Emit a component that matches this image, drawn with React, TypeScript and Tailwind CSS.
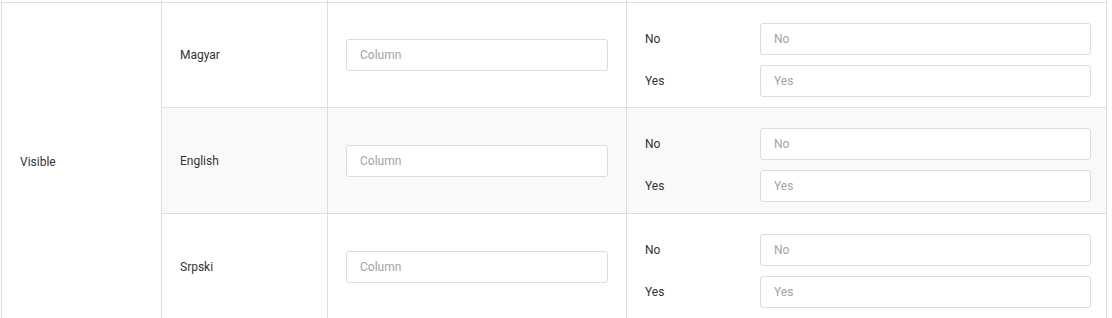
const rows = [
  { lang: "Magyar", bg: "bg-white", h: "h-[105px]" },
  { lang: "English", bg: "bg-[#f9f9f9]", h: "h-[106px]" },
  { lang: "Srpski", bg: "bg-white", h: "h-[106px]" },
];

function TextInput({ placeholder }: { placeholder: string }) {
  return (
    <input
      type="text"
      placeholder={placeholder}
      className="h-[32px] w-full rounded-[3px] border border-[#dcdcdc] bg-white px-[13px] text-[12px] text-[#333] outline-none placeholder:text-[#a3a3a3]"
    />
  );
}

export default function App() {
  return (
    <div className="h-[318px] w-[1112px] overflow-hidden bg-white font-['Roboto',sans-serif] text-[12px] text-[#333]">
      <div className="ml-px w-[1106px] border-x border-[#dddddd]">
        {/* tail of the row above */}
        <div className="flex h-[2px]">
          <div className="w-[160px] shrink-0 border-r border-[#dddddd]" />
          <div className="w-[166px] shrink-0 border-r border-[#dddddd]" />
          <div className="w-[299px] shrink-0 border-r border-[#dddddd]" />
          <div className="flex-1" />
        </div>

        <div className="flex border-t border-[#dddddd]">
          <div className="flex w-[160px] shrink-0 items-center border-r border-[#dddddd] px-[18px]">
            Visible
          </div>

          <div className="flex flex-1 flex-col">
            {rows.map((row) => (
              <div
                key={row.lang}
                className={`flex shrink-0 border-b border-[#dddddd] ${row.h} ${row.bg}`}
              >
                <div className="flex w-[166px] shrink-0 items-center border-r border-[#dddddd] px-[18px]">
                  {row.lang}
                </div>
                <div className="flex w-[299px] shrink-0 items-center border-r border-[#dddddd] px-[18px]">
                  <TextInput placeholder="Column" />
                </div>
                <div className="flex flex-1 flex-col gap-[10px] pl-[18px] pr-[15px] pt-[20px]">
                  {["No", "Yes"].map((v) => (
                    <div key={v} className="flex items-center">
                      <div className="w-[115px] shrink-0">{v}</div>
                      <TextInput placeholder={v} />
                    </div>
                  ))}
                </div>
              </div>
            ))}
          </div>
        </div>
      </div>
    </div>
  );
}
